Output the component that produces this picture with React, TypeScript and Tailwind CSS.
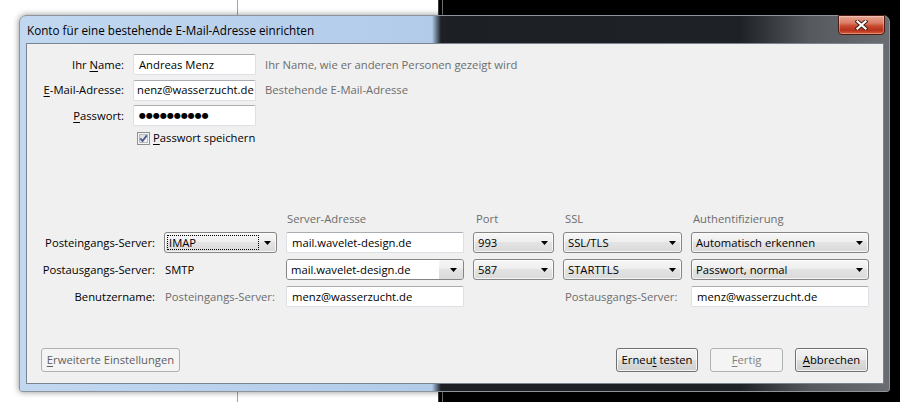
import React from "react";

const Acc = ({ children }: { children: React.ReactNode }) => (
  <span className="underline decoration-1 underline-offset-[2px]">{children}</span>
);

const Arrow = () => (
  <svg width="7" height="4" viewBox="0 0 7 4" className="shrink-0">
    <path d="M0 0h7L3.5 4z" fill="#000" />
  </svg>
);

function Field({ children, className = "" }: { children?: React.ReactNode; className?: string }) {
  return (
    <div
      className={`flex h-[21px] items-center overflow-hidden whitespace-nowrap rounded-[2px] border border-[#dbdfe6] border-t-[#abadb3] bg-white px-[5px] text-black ${className}`}
    >
      {children}
    </div>
  );
}

function Combo({ value, focus = false }: { value: string; focus?: boolean }) {
  return (
    <div className="relative flex h-[21px] items-center rounded-[3px] border border-[#858585] bg-[linear-gradient(#f6f6f6_0%,#eeeeee_50%,#e3e3e3_50%,#dadada_100%)] pl-[4px] pr-[5px] text-black shadow-[inset_0_0_0_1px_rgba(255,255,255,0.7)]">
      <span className="flex-1 whitespace-nowrap">{value}</span>
      <Arrow />
      {focus && <div className="absolute bottom-[2px] left-[2px] right-[17px] top-[2px] border border-dotted border-black" />}
    </div>
  );
}

function EditCombo({ value }: { value: string }) {
  return (
    <div className="flex h-[21px] overflow-hidden rounded-[3px] border border-[#858585] text-black">
      <div className="flex flex-1 items-center whitespace-nowrap bg-white pl-[4px]">{value}</div>
      <div className="flex w-[24px] items-center justify-end bg-[linear-gradient(#f6f6f6_0%,#eeeeee_50%,#e3e3e3_50%,#dadada_100%)] pr-[6px]">
        <Arrow />
      </div>
    </div>
  );
}

function Btn({ children, disabled = false, className = "" }: { children: React.ReactNode; disabled?: boolean; className?: string }) {
  const look = disabled
    ? "border-[#adb2b5] bg-[#f4f4f4] text-[#838383]"
    : "border-[#707070] bg-[linear-gradient(#f2f2f2_0%,#ebebeb_48%,#dddddd_52%,#cfcfcf_100%)] text-black shadow-[inset_0_0_0_1px_rgba(255,255,255,0.75)]";
  return (
    <div className={`flex h-[24px] items-center justify-center whitespace-nowrap rounded-[3px] border ${look} ${className}`}>
      {children}
    </div>
  );
}

function CheckBox() {
  return (
    <svg width="13" height="13" viewBox="0 0 13 13" className="shrink-0">
      <defs>
        <linearGradient id="cbfill" x1="0" y1="0" x2="1" y2="1">
          <stop offset="0" stopColor="#d6d8dc" />
          <stop offset="1" stopColor="#fbfbfb" />
        </linearGradient>
      </defs>
      <rect x="0.5" y="0.5" width="12" height="12" fill="#f4f4f4" stroke="#8e8f8f" />
      <rect x="2.5" y="2.5" width="8" height="8" fill="url(#cbfill)" stroke="#b8bcc2" />
      <path d="M3.3 6.4l2.2 2.6 4.3-5.6" fill="none" stroke="#4b5c8c" strokeWidth="1.8" />
    </svg>
  );
}

function CloseButton() {
  return (
    <div className="absolute right-[4px] top-[-1px] flex h-[20px] w-[47px] items-center justify-center rounded-b-[4px] border border-[#4e1a12] bg-[linear-gradient(#e9a896_0%,#d97a62_40%,#c84a30_55%,#b8311b_80%,#d6623e_100%)] shadow-[inset_0_0_0_1px_rgba(255,255,255,0.3)]">
      <svg width="13" height="10" viewBox="0 0 13 10">
        <path d="M2.5 1.5l8 7M10.5 1.5l-8 7" stroke="#3a1a14" strokeWidth="4" strokeLinecap="square" />
        <path d="M2.5 1.5l8 7M10.5 1.5l-8 7" stroke="#fff" strokeWidth="2.2" strokeLinecap="square" />
      </svg>
    </div>
  );
}

function FormRow({ label, children, hint }: { label: React.ReactNode; children: React.ReactNode; hint?: string }) {
  return (
    <div className="flex h-[21px] items-center">
      <div className="w-[97px] whitespace-nowrap text-right text-black">{label}</div>
      <div className="ml-[9px] w-[123px]">{children}</div>
      {hint && <div className="ml-[9px] text-[#6d6d6d]">{hint}</div>}
    </div>
  );
}

export default function App() {
  return (
    <div className="relative flex h-[402px] w-[900px] overflow-hidden font-['Open_Sans',sans-serif] text-[11.25px] leading-[14px]">
      <div className="flex w-[438px] bg-white">
        <div className="w-[237px]" />
        <div className="w-px bg-[#a3a3a3]" />
      </div>
      <div className="flex flex-1 border-l border-[#3a3a3a] bg-black">
        <div className="w-[3px]" />
        <div className="w-px bg-[#6e6e6e]" />
      </div>

      <div className="absolute left-[19px] top-[15px] flex h-[377px] w-[871px] flex-col rounded-t-[7px] rounded-b-[3px] border border-[#8d949c] bg-[linear-gradient(90deg,#c2d8f1_0px,#b1cbe9_412px,#1c2025_421px,#1e2227_720px,#56595d_790px,#6a6d71_871px)] shadow-[0_0_6px_rgba(0,0,0,0.45)]">
        <div className="relative flex h-[27px] shrink-0 items-center pl-[7px] text-[11.7px] text-black">
          Konto für eine bestehende E-Mail-Adresse einrichten
          <CloseButton />
        </div>

        <div className="mb-[7px] ml-[6px] mr-[5px] flex flex-1 flex-col border border-[#7b8591] bg-[#f0f0f0]">
          <div className="flex flex-col gap-[4.5px] pt-[10px]">
            <FormRow label={<>Ihr <Acc>N</Acc>ame:</>} hint="Ihr Name, wie er anderen Personen gezeigt wird">
              <Field>Andreas Menz</Field>
            </FormRow>
            <FormRow label={<><Acc>E</Acc>-Mail-Adresse:</>} hint="Bestehende E-Mail-Adresse">
              <Field className="pl-[3px]">nenz@wasserzucht.de</Field>
            </FormRow>
            <FormRow label={<><Acc>P</Acc>asswort:</>}>
              <Field className="font-['DejaVu_Sans',sans-serif] text-[8px]">●●●●●●●●●●</Field>
            </FormRow>
          </div>
          <div className="mt-[4px] flex h-[16px] items-center pl-[110px]">
            <CheckBox />
            <span className="ml-[3px] text-black">
              <Acc>P</Acc>asswort speichern
            </span>
          </div>

          <div className="mt-[65px] grid grid-cols-[123px_113px_178px_81px_119px_178px] gap-x-[9px] pl-[5px]">
            <div className="col-start-3 flex h-[16px] items-center pl-[1px] text-[#6d6d6d]">Server-Adresse</div>
            <div className="flex h-[16px] items-center pl-[3px] text-[#6d6d6d]">Port</div>
            <div className="flex h-[16px] items-center pl-[2px] text-[#6d6d6d]">SSL</div>
            <div className="flex h-[16px] items-center pl-[2px] text-[#6d6d6d]">Authentifizierung</div>

            <div className="mt-[5px] flex items-center justify-end whitespace-nowrap text-black">Posteingangs-Server:</div>
            <div className="mt-[5px]"><Combo value="IMAP" focus /></div>
            <div className="mt-[5px]"><Field>mail.wavelet-design.de</Field></div>
            <div className="mt-[5px]"><Combo value="993" /></div>
            <div className="mt-[5px]"><Combo value="SSL/TLS" /></div>
            <div className="mt-[5px]"><Combo value="Automatisch erkennen" /></div>

            <div className="mt-[6px] flex items-center justify-end whitespace-nowrap text-black">Postausgangs-Server:</div>
            <div className="mt-[6px] flex items-center pl-[1px] text-black">SMTP</div>
            <div className="mt-[6px]"><EditCombo value="mail.wavelet-design.de" /></div>
            <div className="mt-[6px]"><Combo value="587" /></div>
            <div className="mt-[6px]"><Combo value="STARTTLS" /></div>
            <div className="mt-[6px]"><Combo value="Passwort, normal" /></div>

            <div className="mt-[6px] flex items-center justify-end text-black">Benutzername:</div>
            <div className="mt-[6px] flex items-center whitespace-nowrap pl-[1px] text-[#6d6d6d]">Posteingangs-Server:</div>
            <div className="mt-[6px]"><Field>menz@wasserzucht.de</Field></div>
            <div className="mt-[6px]" />
            <div className="mt-[6px] flex items-center whitespace-nowrap pl-[2px] text-[#6d6d6d]">Postausgangs-Server:</div>
            <div className="mt-[6px]"><Field>menz@wasserzucht.de</Field></div>
          </div>

          <div className="mt-auto flex items-center pb-[11px] pl-[14px] pr-[15px]">
            <Btn className="w-[139px] border-[#adb2b5] !text-[#5f5f5f]" disabled>
              <span><Acc>E</Acc>rweiterte Einstellungen</span>
            </Btn>
            <div className="flex-1" />
            <Btn className="w-[82px]">
              <span>Erneu<Acc>t</Acc> testen</span>
            </Btn>
            <Btn className="ml-[12px] w-[73px]" disabled>
              <span><Acc>F</Acc>ertig</span>
            </Btn>
            <Btn className="ml-[12px] w-[73px]">
              <span><Acc>A</Acc>bbrechen</span>
            </Btn>
          </div>
        </div>
      </div>
    </div>
  );
}
